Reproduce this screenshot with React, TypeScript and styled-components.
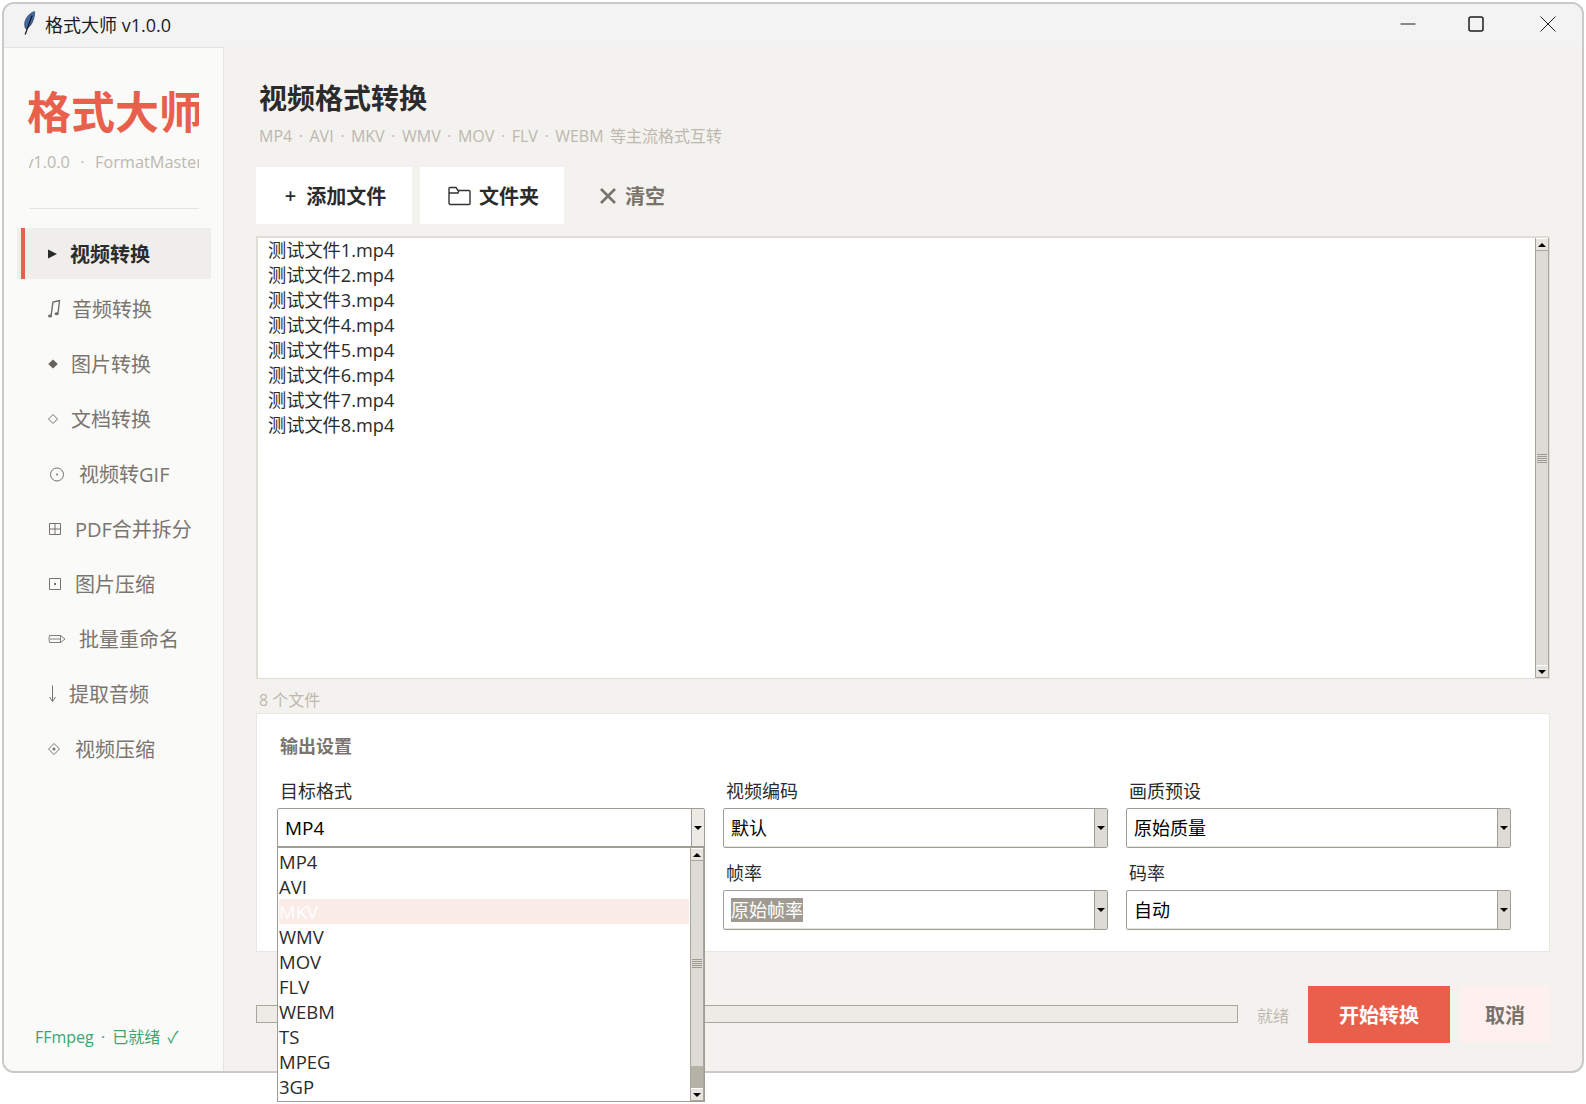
import React from "react";
import styled, { createGlobalStyle } from "styled-components";

const FONT = `"Open Sans", "Noto Sans CJK SC", sans-serif`;
const RED = "#e8604c";

const GlobalStyle = createGlobalStyle`
    html, body {
        margin: 0;
        padding: 0;
        background: #ffffff;
        font-family: ${FONT};
    }
    * {
        box-sizing: border-box;
    }
`;

const NAV_ITEMS = [
    { label: "视频转换", icon: "play", textX: 70, active: true },
    { label: "音频转换", icon: "music", textX: 72 },
    { label: "图片转换", icon: "solid", textX: 71 },
    { label: "文档转换", icon: "hollow", textX: 71 },
    { label: "视频转GIF", icon: "circle", textX: 79 },
    { label: "PDF合并拆分", icon: "grid", textX: 75 },
    { label: "图片压缩", icon: "dot", textX: 75 },
    { label: "批量重命名", icon: "pencil", textX: 79 },
    { label: "提取音频", icon: "down", textX: 69 },
    { label: "视频压缩", icon: "target", textX: 75 },
];

const FILES = [1, 2, 3, 4, 5, 6, 7, 8].map((n) => `测试文件${n}.mp4`);
const FORMATS = ["MP4", "AVI", "MKV", "WMV", "MOV", "FLV", "WEBM", "TS", "MPEG", "3GP"];

function NavIcon({ name }: { name: string }) {
    const common = { fill: "none", stroke: "#77726c", strokeWidth: 1 };
    return (
        <svg width="18" height="18" viewBox="0 0 18 18">
            {name === "play" && <path d="M0 4.5 L9 9 L0 13.5 Z" fill="#2b2b2b" />}
            {name === "music" && (
                <>
                    <path d="M3 16 L5 2 L11.5 0.5 L10 13.5" fill="none" stroke="#6f6a65" strokeWidth="1.4" />
                    <ellipse cx="2" cy="16" rx="2" ry="1.6" fill="#6f6a65" />
                    <ellipse cx="8.6" cy="13.8" rx="2" ry="1.5" fill="#6f6a65" />
                </>
            )}
            {name === "solid" && <path d="M5 4.5 L9.8 9 L5 13.5 L0.2 9 Z" fill="#66615c" />}
            {name === "hollow" && <path d="M5 4.5 L9.5 9 L5 13.5 L0.5 9 Z" {...common} />}
            {name === "circle" && (
                <>
                    <circle cx="9" cy="9.5" r="6.5" {...common} />
                    <circle cx="9" cy="9.5" r="1" fill="#77726c" />
                </>
            )}
            {name === "grid" && (
                <path d="M1.5 3.5 H12.5 V14.5 H1.5 Z M7 3.5 V14.5 M1.5 9 H12.5" {...common} />
            )}
            {name === "dot" && (
                <>
                    <path d="M1.5 3.5 H12.5 V14.5 H1.5 Z" {...common} />
                    <rect x="6" y="8" width="2" height="2" fill="#77726c" />
                </>
            )}
            {name === "pencil" && (
                <path
                    d="M1.5 5.5 H12.5 L17 9 L12.5 12.5 H1.5 Q0.5 9 1.5 5.5 Z M2 9 H12.5 M12.5 5.5 V12.5"
                    fill="none"
                    stroke="#77726c"
                    strokeWidth="0.9"
                />
            )}
            {name === "down" && <path d="M4.5 0.5 V16 M1.5 12 L4.5 16.5 L7.5 12" {...common} />}
            {name === "target" && (
                <>
                    <path d="M6 3.5 L11.5 9 L6 14.5 L0.5 9 Z" {...common} />
                    <circle cx="6" cy="9" r="1.5" fill="#77726c" />
                </>
            )}
        </svg>
    );
}

function Scrollbar({ rest }: { rest?: number }) {
    return (
        <ScrollTrack>
            <ScrollButton>
                <ArrowUp />
            </ScrollButton>
            <ScrollThumb>
                <Grip />
            </ScrollThumb>
            {rest ? <ScrollRest $height={rest} /> : null}
            <ScrollButton>
                <ArrowDown />
            </ScrollButton>
        </ScrollTrack>
    );
}

function Select({
    value,
    selected,
    open,
    strong,
    children,
}: {
    value: string;
    selected?: boolean;
    open?: boolean;
    strong?: boolean;
    children?: React.ReactNode;
}) {
    return (
        <SelectBox>
            <SelectValue $strong={strong}>
                <SelectText $selected={selected}>{value}</SelectText>
            </SelectValue>
            <SelectArrow $open={open}>
                <ArrowDown />
            </SelectArrow>
            {children}
        </SelectBox>
    );
}

export default function App() {
    return (
        <Page>
            <GlobalStyle />
            <Window>
                <TitleBar>
                    <svg width="14" height="26" viewBox="0 0 14 26">
                        <path
                            d="M12.5 0.5 C7 2.5 3.5 7 2.8 12 C2.5 15 3.2 17 4 18 C8 16 10.5 12 11.5 8 C12.4 5 12.8 2.5 12.5 0.5 Z"
                            fill="#3f6aa8"
                            stroke="#26344d"
                            strokeWidth="0.7"
                        />
                        <path d="M10 4.5 L3.2 23.5" stroke="#151515" strokeWidth="1.2" fill="none" />
                    </svg>
                    <WindowTitle>格式大师 v1.0.0</WindowTitle>
                    <WindowControls>
                        <svg width="16" height="16" viewBox="0 0 16 16">
                            <path d="M0.5 8 H15.5" stroke="#1c1c1c" fill="none" />
                        </svg>
                        <svg width="16" height="16" viewBox="0 0 16 16">
                            <rect x="1" y="1" width="14" height="14" rx="2" stroke="#1c1c1c" strokeWidth="1.5" fill="none" />
                        </svg>
                        <svg width="16" height="16" viewBox="0 0 16 16">
                            <path d="M0.5 0.5 L15.5 15.5 M15.5 0.5 L0.5 15.5" stroke="#1c1c1c" fill="none" />
                        </svg>
                    </WindowControls>
                </TitleBar>
                <Body>
                    <Sidebar>
                        <Logo>格式大师</Logo>
                        <Version>
                            <span>{"v1.0.0  ·  FormatMaster"}</span>
                        </Version>
                        <Divider />
                        <Nav>
                            {NAV_ITEMS.map((item) => (
                                <NavItem key={item.label} $active={item.active}>
                                    <NavMarker $active={item.active} />
                                    <NavIconSlot $textX={item.textX}>
                                        <NavIcon name={item.icon} />
                                    </NavIconSlot>
                                    {item.label}
                                </NavItem>
                            ))}
                        </Nav>
                        <EngineStatus>FFmpeg · 已就绪 ✓</EngineStatus>
                    </Sidebar>
                    <Main>
                        <PageTitle>视频格式转换</PageTitle>
                        <PageSubtitle>MP4 · AVI · MKV · WMV · MOV · FLV · WEBM 等主流格式互转</PageSubtitle>
                        <Toolbar>
                            <ToolButton $width={156}>
                                <PlusSign>+</PlusSign>添加文件
                            </ToolButton>
                            <ToolButton $width={144}>
                                <svg width="23" height="20" viewBox="0 0 23 20">
                                    <path
                                        d="M1 17 V2.5 Q1 1.5 2 1.5 H8 L10 4.5 H21 Q22 4.5 22 5.5 V17.5 Q22 18.5 21 18.5 H2.5 Q1 18.5 1 17 Z M1 7 H10 L11 4.5"
                                        fill="none"
                                        stroke="#333"
                                        strokeWidth="1.4"
                                    />
                                </svg>
                                文件夹
                            </ToolButton>
                            <ClearButton>
                                <svg width="16" height="16" viewBox="0 0 16 16">
                                    <path d="M1 1 L15 15 M15 1 L1 15" stroke="#77726c" strokeWidth="2.6" fill="none" />
                                </svg>
                                清空
                            </ClearButton>
                        </Toolbar>
                        <FileList>
                            <FileRows>
                                {FILES.map((file) => (
                                    <FileRow key={file}>{file}</FileRow>
                                ))}
                            </FileRows>
                            <Scrollbar />
                        </FileList>
                        <FileCount>8 个文件</FileCount>
                        <Settings>
                            <SettingsTitle>输出设置</SettingsTitle>
                            <SettingsGrid>
                                <Field>
                                    <FieldLabel>目标格式</FieldLabel>
                                    <Select value="MP4" open strong>
                                        <Dropdown>
                                            <DropdownRows>
                                                {FORMATS.map((format) => (
                                                    <DropdownRow key={format} $active={format === "MKV"}>
                                                        {format}
                                                    </DropdownRow>
                                                ))}
                                            </DropdownRows>
                                            <Scrollbar rest={22} />
                                        </Dropdown>
                                    </Select>
                                </Field>
                                <Field>
                                    <FieldLabel>视频编码</FieldLabel>
                                    <Select value="默认" />
                                </Field>
                                <Field>
                                    <FieldLabel>画质预设</FieldLabel>
                                    <Select value="原始质量" />
                                </Field>
                                <div />
                                <Field>
                                    <FieldLabel>帧率</FieldLabel>
                                    <Select value="原始帧率" selected />
                                </Field>
                                <Field>
                                    <FieldLabel>码率</FieldLabel>
                                    <Select value="自动" />
                                </Field>
                            </SettingsGrid>
                        </Settings>
                        <Footer>
                            <Progress />
                            <StatusText>就绪</StatusText>
                            <StartButton>开始转换</StartButton>
                            <CancelButton>取消</CancelButton>
                        </Footer>
                    </Main>
                </Body>
            </Window>
        </Page>
    );
}

const Page = styled.div`
    height: 1104px;
    padding: 2px 0 0 2px;
    overflow: hidden;
`;

const Window = styled.div`
    position: relative;
    width: 1582px;
    height: 1071px;
    border: 2px solid #c9c9c7;
    border-radius: 12px;
    background: #f4f2ee;
    display: flex;
    flex-direction: column;
`;

const TitleBar = styled.header`
    height: 43px;
    flex: none;
    display: flex;
    align-items: center;
    padding: 0 0 4px 18px;
    background: #f3f3f3;
    border-radius: 10px 10px 0 0;
`;

const WindowTitle = styled.span`
    margin-left: 9px;
    font-size: 18px;
    color: #1c1c1c;
`;

const WindowControls = styled.div`
    margin-left: auto;
    display: flex;
    gap: 52px;
    padding-right: 26px;
    svg:nth-child(2) {
        margin-right: 4px;
    }
`;

const Body = styled.div`
    flex: 1;
    min-height: 0;
    display: flex;
`;

const Sidebar = styled.aside`
    width: 220px;
    flex: none;
    display: flex;
    flex-direction: column;
    background: #fafaf8;
    border-top: 1px solid #e6e4df;
    border-right: 1px solid #e6e4df;
    border-radius: 0 0 0 10px;
`;

const Logo = styled.h1`
    margin: 37px 0 0 23px;
    width: 172px;
    height: 54px;
    line-height: 54px;
    font-size: 44px;
    font-weight: 700;
    color: ${RED};
    white-space: nowrap;
    overflow: hidden;
`;

const Version = styled.div`
    margin: 11px 0 0 25px;
    width: 170px;
    height: 24px;
    line-height: 24px;
    font-size: 16.3px;
    word-spacing: 1px;
    color: #bdb8b0;
    display: flex;
    justify-content: center;
    overflow: hidden;
    white-space: pre;
    span {
        flex: none;
    }
`;

const Divider = styled.div`
    margin: 34px 0 0 25px;
    width: 170px;
    height: 1px;
    background: #e6e4df;
`;

const Nav = styled.nav`
    margin: 19px 12px 0 13px;
    display: flex;
    flex-direction: column;
    gap: 4px;
`;

const NavItem = styled.div<{ $active?: boolean }>`
    height: 51px;
    display: flex;
    align-items: center;
    padding-left: 4px;
    font-size: 20px;
    font-weight: ${(p) => (p.$active ? 700 : 400)};
    color: ${(p) => (p.$active ? "#2b2b2b" : "#7a7570")};
    background: ${(p) => (p.$active ? "#f0eeea" : "transparent")};
    white-space: nowrap;
`;

const NavMarker = styled.span<{ $active?: boolean }>`
    width: 4px;
    height: 100%;
    flex: none;
    background: ${(p) => (p.$active ? RED : "transparent")};
`;

const NavIconSlot = styled.span<{ $textX: number }>`
    flex: none;
    width: ${(p) => p.$textX - 25}px;
    padding-left: 23px;
    display: flex;
    align-items: center;
`;

const EngineStatus = styled.div`
    margin: auto 0 23px 31px;
    line-height: 22px;
    font-size: 16px;
    word-spacing: 3px;
    color: #3aa573;
`;

const Main = styled.main`
    flex: 1;
    min-width: 0;
    padding: 0 32px;
    display: flex;
    flex-direction: column;
`;

const PageTitle = styled.h2`
    margin: 31px 0 0 3px;
    height: 40px;
    line-height: 40px;
    font-size: 28px;
    font-weight: 700;
    color: #2b2b2b;
`;

const PageSubtitle = styled.p`
    margin: 8px 0 0 3px;
    height: 20px;
    line-height: 20px;
    font-size: 16px;
    word-spacing: 2.4px;
    color: #bdb8b0;
    white-space: nowrap;
`;

const Toolbar = styled.div`
    margin-top: 21px;
    height: 57px;
    flex: none;
    display: flex;
    gap: 8px;
`;

const ToolButton = styled.div<{ $width: number }>`
    width: ${(p) => p.$width}px;
    padding-left: 3px;
    display: flex;
    align-items: center;
    justify-content: center;
    gap: 8px;
    background: #ffffff;
    font-size: 20px;
    font-weight: 700;
    color: #2b2b2b;
`;

const PlusSign = styled.span`
    font-size: 20px;
    font-weight: 600;
    margin-right: 2px;
`;

const ClearButton = styled.div`
    margin-left: 28px;
    display: flex;
    align-items: center;
    gap: 9px;
    font-size: 20px;
    font-weight: 700;
    color: #77726c;
`;

const FileList = styled.div`
    margin-top: 12px;
    height: 443px;
    flex: none;
    display: flex;
    background: #ffffff;
    border: 2px solid #e0ddd6;
    border-right-width: 1px;
    border-bottom-width: 1px;
`;

const FileRows = styled.div`
    flex: 1;
    padding-left: 10px;
`;

const FileRow = styled.div`
    height: 25px;
    line-height: 25px;
    font-size: 18.2px;
    color: #2b2b2b;
`;

const ScrollTrack = styled.div`
    width: 14px;
    flex: none;
    display: flex;
    flex-direction: column;
    background: #dcdbd5;
    border: 1px solid #a9a69c;
    border-width: 0 1px;
`;

const ScrollButton = styled.div`
    height: 13px;
    flex: none;
    display: flex;
    align-items: center;
    justify-content: center;
    background: #e6e4de;
    border-top: 1px solid #ffffff;
    border-bottom: 1px solid #a9a69c;
`;

const ScrollThumb = styled.div`
    flex: 1;
    display: flex;
    align-items: center;
    justify-content: center;
    background: #dcdbd5;
`;

const Grip = styled.div`
    width: 10px;
    height: 9px;
    background: repeating-linear-gradient(to bottom, #9e9b92 0 1px, transparent 1px 2px);
`;

const ScrollRest = styled.div<{ $height: number }>`
    height: ${(p) => p.$height}px;
    flex: none;
    background: #b5b2a7;
`;

const ArrowUp = styled.span`
    width: 0;
    height: 0;
    border-left: 4px solid transparent;
    border-right: 4px solid transparent;
    border-bottom: 4px solid #000000;
`;

const ArrowDown = styled.span`
    width: 0;
    height: 0;
    border-left: 4px solid transparent;
    border-right: 4px solid transparent;
    border-top: 4px solid #000000;
`;

const FileCount = styled.div`
    margin-top: 11px;
    height: 20px;
    line-height: 20px;
    padding-left: 3px;
    font-size: 16px;
    color: #bdb8b0;
`;

const Settings = styled.section`
    margin-top: 3px;
    height: 239px;
    flex: none;
    padding: 20px 20px 0;
    background: #ffffff;
    border: 1px solid #e9e7e2;
`;

const SettingsTitle = styled.h3`
    margin: 0;
    height: 24px;
    line-height: 24px;
    padding-left: 3px;
    font-size: 18px;
    font-weight: 700;
    color: #7a7570;
`;

const SettingsGrid = styled.div`
    margin-top: 21px;
    display: grid;
    grid-template-columns: 428px 385px 385px;
    column-gap: 18px;
    row-gap: 13px;
`;

const Field = styled.div`
    display: flex;
    flex-direction: column;
    gap: 5px;
`;

const FieldLabel = styled.label`
    height: 24px;
    line-height: 24px;
    padding-left: 3px;
    font-size: 18px;
    color: #2b2b2b;
`;

const SelectBox = styled.div`
    position: relative;
    height: 40px;
    display: flex;
    background: #ffffff;
    border: 1px solid #a09d94;
    border-radius: 2px;
`;

const SelectValue = styled.div<{ $strong?: boolean }>`
    flex: 1;
    display: flex;
    align-items: center;
    padding-left: 7px;
    font-size: ${(p) => (p.$strong ? 19 : 18)}px;
    color: #000000;
    border-bottom: 1px solid #e6e4df;
`;

const SelectText = styled.span<{ $selected?: boolean }>`
    line-height: 24px;
    color: ${(p) => (p.$selected ? "#ffffff" : "#000000")};
    background: ${(p) => (p.$selected ? "#a09b92" : "transparent")};
`;

const SelectArrow = styled.div<{ $open?: boolean }>`
    width: 13px;
    flex: none;
    display: flex;
    align-items: center;
    justify-content: center;
    background: ${(p) => (p.$open ? "#eceae5" : "#dcdbd5")};
    border-left: 1px solid #a09d94;
`;

const Dropdown = styled.div`
    position: absolute;
    z-index: 10;
    top: 100%;
    left: -1px;
    right: -1px;
    margin-top: -1px;
    height: 256px;
    display: flex;
    background: #ffffff;
    border: 1px solid #a09d94;
    border-top-width: 2px;
`;

const DropdownRows = styled.div`
    flex: 1;
    padding: 1px 1px 0;
`;

const DropdownRow = styled.div<{ $active?: boolean }>`
    height: 25px;
    line-height: 25px;
    font-size: 18.5px;
    color: ${(p) => (p.$active ? "#ffffff" : "#2b2b2b")};
    background: ${(p) => (p.$active ? "#fbece8" : "transparent")};
`;

const Footer = styled.div`
    margin-top: 34px;
    height: 57px;
    flex: none;
    display: flex;
    align-items: center;
`;

const Progress = styled.div`
    width: 982px;
    height: 18px;
    margin-bottom: 1px;
    background: #ecebe6;
    border: 1px solid #a9a69c;
`;

const StatusText = styled.span`
    margin-left: 19px;
    width: 51px;
    font-size: 16px;
    color: #bdb8b0;
`;

const StartButton = styled.div`
    width: 142px;
    height: 100%;
    display: flex;
    align-items: center;
    justify-content: center;
    background: ${RED};
    color: #ffffff;
    font-size: 20px;
    font-weight: 700;
`;

const CancelButton = styled.div`
    margin-left: 10px;
    width: 90px;
    height: 100%;
    display: flex;
    align-items: center;
    justify-content: center;
    background: #fdf0ee;
    color: #77726c;
    font-size: 20px;
    font-weight: 700;
`;
